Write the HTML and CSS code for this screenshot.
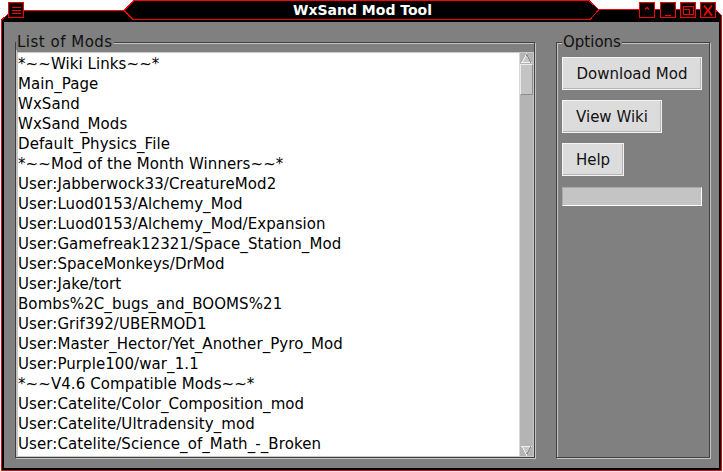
FILE: index.html
```html
<!DOCTYPE html>
<html>
<head>
<meta charset="utf-8">
<title>WxSand Mod Tool</title>
<link rel="stylesheet" href="styles.css">
</head>
<body>
<div class="window">
  <header class="titlebar">
    <svg class="titlebar-shape" width="723" height="22" viewBox="0 0 723 22" shape-rendering="crispEdges">
      <polygon points="1.5,22 1.5,20 8,14 8,10.5 124,10.5 134,0.5 589,0.5 598.5,9.5 715,9.5 721.5,15.5 721.5,22" fill="#000"/>
      <polyline points="1.5,22 1.5,20 8,14 8,10.5 124,10.5 134,0.5 589,0.5 598.5,9.5 715,9.5 721.5,15.5 721.5,22" fill="none" stroke="#ff0000" stroke-width="1"/>
      <polyline points="124,10.5 133,19.5 590,19.5 598.5,10" fill="none" stroke="#ff0000" stroke-width="1"/>
    </svg>
    <div class="tb-left">
      <span class="tb-btn">
        <svg width="14" height="14" viewBox="0 0 14 14" shape-rendering="crispEdges"><path d="M3 4.5h9M3 7.5h9M3 10.5h9" stroke="#ff0000" stroke-width="1.2" fill="none"/></svg>
      </span>
    </div>
    <div class="tb-title">WxSand Mod Tool</div>
    <div class="tb-right">
      <span class="tb-btn first">
        <svg width="14" height="14" viewBox="0 0 14 14"><path d="M5 6.5L7 4.5L9 6.5" stroke="#ff0000" stroke-width="1.3" fill="none"/></svg>
      </span>
      <span class="tb-btn">
        <svg width="14" height="14" viewBox="0 0 14 14" shape-rendering="crispEdges"><path d="M4 12.5h6" stroke="#ff0000" stroke-width="1.3" fill="none"/></svg>
      </span>
      <span class="tb-btn">
        <svg width="14" height="14" viewBox="0 0 14 14" shape-rendering="crispEdges"><path d="M2.5 3.5h10v8h-10z M2.5 6.5h6v5" stroke="#ff0000" stroke-width="1" fill="none"/></svg>
      </span>
      <span class="tb-btn">
        <svg width="14" height="14" viewBox="0 0 14 14"><path d="M3 2.5L11 12.5M11 2.5L3 12.5" stroke="#ff0000" stroke-width="1.8" fill="none"/></svg>
      </span>
    </div>
  </header>
  <div class="frame">
    <div class="client">
      <fieldset class="group mods">
        <legend>List of Mods</legend>
        <div class="listbox">
          <ul class="items">
            <li>*~~Wiki Links~~*</li>
            <li>Main_Page</li>
            <li>WxSand</li>
            <li>WxSand_Mods</li>
            <li>Default_Physics_File</li>
            <li>*~~Mod of the Month Winners~~*</li>
            <li>User:Jabberwock33/CreatureMod2</li>
            <li>User:Luod0153/Alchemy_Mod</li>
            <li>User:Luod0153/Alchemy_Mod/Expansion</li>
            <li>User:Gamefreak12321/Space_Station_Mod</li>
            <li>User:SpaceMonkeys/DrMod</li>
            <li>User:Jake/tort</li>
            <li>Bombs%2C_bugs_and_BOOMS%21</li>
            <li>User:Grif392/UBERMOD1</li>
            <li>User:Master_Hector/Yet_Another_Pyro_Mod</li>
            <li>User:Purple100/war_1.1</li>
            <li>*~~V4.6 Compatible Mods~~*</li>
            <li>User:Catelite/Color_Composition_mod</li>
            <li>User:Catelite/Ultradensity_mod</li>
            <li>User:Catelite/Science_of_Math_-_Broken</li>
          </ul>
          <div class="vscroll">
            <div class="arrow">
              <svg width="13" height="11" viewBox="0 0 13 11" shape-rendering="crispEdges"><path d="M6.5 1.5L2 9.5H11Z" fill="#c8c8c8" stroke="#f0f0f0" stroke-width="1"/><path d="M6.5 1.5L11 9.5" stroke="#8c8c8c" stroke-width="1" fill="none"/></svg>
            </div>
            <div class="track"><div class="thumb"></div></div>
            <div class="arrow">
              <svg width="13" height="11" viewBox="0 0 13 11" shape-rendering="crispEdges"><path d="M6.5 9.5L2 1.5H11Z" fill="#c8c8c8" stroke="#f0f0f0" stroke-width="1"/><path d="M6.5 9.5L11 1.5" stroke="#8c8c8c" stroke-width="1" fill="none"/></svg>
            </div>
          </div>
        </div>
      </fieldset>
      <fieldset class="group options">
        <legend>Options</legend>
        <button class="btn btn-download">Download Mod</button>
        <button class="btn btn-wiki">View Wiki</button>
        <button class="btn btn-help">Help</button>
        <div class="gauge"></div>
      </fieldset>
    </div>
  </div>
</div>
</body>
</html>
```

FILE: styles.css
```css
html, body {
  margin: 0;
  padding: 0;
  background: #ffffff;
}

body {
  font-family: "DejaVu Sans", "Liberation Sans", sans-serif;
  font-size: 15px;
  color: #000;
}

.window {
  width: 723px;
  height: 472px;
  display: flex;
  flex-direction: column;
}

.titlebar {
  position: relative;
  height: 22px;
  display: grid;
  grid-template-columns: 1fr auto 1fr;
  align-items: start;
  padding: 0 7px 0 8px;
  box-sizing: border-box;
}

.titlebar-shape {
  position: absolute;
  left: 0;
  top: 0;
  z-index: 0;
}

.tb-left, .tb-right, .tb-title {
  position: relative;
  z-index: 1;
}

.tb-left {
  display: flex;
  margin-top: 2px;
}

.tb-right {
  display: flex;
  justify-content: flex-end;
  gap: 4px;
  margin-top: 2px;
}

.tb-right .first {
  margin-right: 1px;
}

.tb-btn {
  width: 16px;
  height: 16px;
  box-sizing: border-box;
  border: 1px solid #ff0000;
  background: #000;
  display: flex;
}

.tb-title {
  color: #ffffff;
  font-weight: bold;
  font-size: 14px;
  line-height: 20px;
  margin-left: 1px;
}

.frame {
  flex: 1;
  margin: 0 1px 1px 1px;
  border: solid #ff0000;
  border-width: 0 1px 1px 1px;
  background: #000;
  padding: 0 2px 2px 2px;
  display: flex;
}

.client {
  flex: 1;
  background: #808080;
  display: flex;
  gap: 21px;
  padding: 12px 9px 10px 11px;
}

.group {
  margin: 0;
  padding: 0;
  min-width: 0;
  box-sizing: border-box;
  height: 424px;
  border: 1px solid #404040;
  box-shadow: inset 1px 1px 0 #c4c4c4, 1px 1px 0 #c4c4c4;
}

.group legend {
  padding: 0 1px;
  margin-left: 0;
  line-height: 16px;
  font-size: 15px;
  color: #111;
  background: #808080;
}

.mods legend {
  letter-spacing: 0.5px;
}

.mods {
  width: 520px;
}

.options {
  width: 154px;
  display: flex;
  flex-direction: column;
  align-items: flex-start;
  padding-left: 5px;
}

.listbox {
  margin: 2px 0 0 1px;
  width: 517px;
  height: 405px;
  box-sizing: border-box;
  border: 1px solid #c8c8c8;
  display: flex;
  background: #fff;
}

.items {
  list-style: none;
  margin: 0;
  padding: 1px 0 0 0;
  flex: 1;
  overflow: hidden;
  background: #fff;
}

.items li {
  height: 20px;
  line-height: 20px;
  white-space: nowrap;
  padding-left: 0;
  letter-spacing: 0.08px;
}

.vscroll {
  width: 14px;
  display: flex;
  flex-direction: column;
  background: #b4b4b4;
  border-left: 1px solid #d8d8d8;
  box-sizing: border-box;
}

.arrow {
  height: 11px;
  display: flex;
  background: #b4b4b4;
}

.track {
  flex: 1;
  display: flex;
  flex-direction: column;
}

.thumb {
  height: 29px;
  margin-top: 0;
  background: #c4c4c4;
  border: 1px solid;
  border-color: #ececec #8c8c8c #8c8c8c #ececec;
}

.btn {
  font-family: "DejaVu Sans", "Liberation Sans", sans-serif;
  font-size: 15px;
  color: #111;
  background: #dcdcdc;
  border: 1px solid #f4f4f4;
  box-shadow: inset -1px -1px 0 #b4b4b4;
  height: 33px;
  padding: 0;
  margin: 0;
}

.btn-download {
  width: 140px;
  margin-top: 7px;
}

.btn-wiki {
  width: 100px;
  margin-top: 10px;
}

.btn-help {
  width: 62px;
  margin-top: 10px;
}

.gauge {
  width: 140px;
  height: 19px;
  margin-top: 11px;
  box-sizing: border-box;
  background: #c4c4c4;
  border: 1px solid;
  border-color: #a8a8a8 #ffffff #ffffff #a8a8a8;
}
```
